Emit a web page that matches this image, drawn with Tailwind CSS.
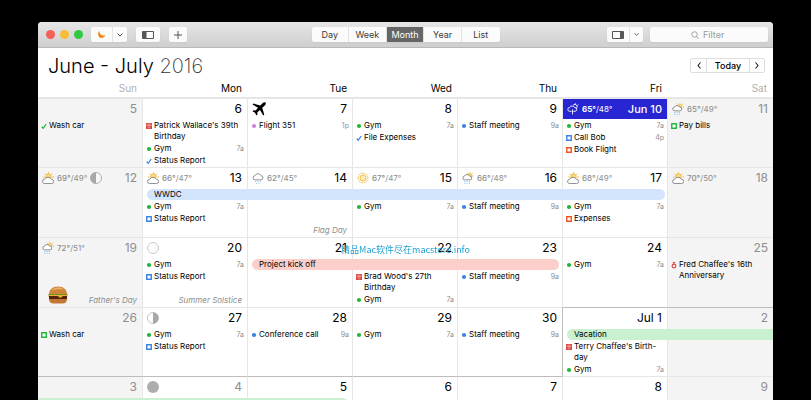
<!DOCTYPE html>
<html lang="en">
<head>
    <meta charset="UTF-8">
    <meta name="viewport" content="width=device-width, initial-scale=1.0">
    <title>Calendar - June - July 2016</title>
    <script src="https://cdn.jsdelivr.net/npm/@tailwindcss/browser@4"></script>
</head>
<body class="h-screen overflow-hidden bg-black px-[38px] pt-[22px] font-['Inter','Noto_Sans_CJK_SC',sans-serif] text-black">

    <!-- Icons -->
    <svg class="hidden">
        <symbol id="partly" viewBox="0 0 26 26">
            <g stroke="#f3b93f" stroke-width="2" stroke-linecap="round"><path d="M14 1v2M6 4l1.500 1.500M3 11h2M22 4l-1.500 1.500M25 11h-2"/></g>
            <circle cx="14" cy="10" r="6" fill="#fbd98b" stroke="#f3b93f" stroke-width="2"/>
            <path d="M6 25a4.500 4.500 0 0 1-.5-9 8 7 0 0 1 15 0 4.500 4.500 0 0 1 .5 9z" fill="#fff" stroke="#858585" stroke-width="2"/>
        </symbol>
        <symbol id="sunrain" viewBox="0 0 26 26">
            <circle cx="17" cy="8" r="4.500" fill="#fbd98b" stroke="#f3b93f" stroke-width="2"/>
            <path d="M17 0v1.500M23 2.500l-1 1M25.500 9H24M11 2l1 1" stroke="#f3b93f" stroke-width="2" stroke-linecap="round"/>
            <path d="M6 17a4 4 0 0 1-.5-8 6 6 0 0 1 11 0 4 4 0 0 1 1 8z" fill="#fff" stroke="#858585" stroke-width="2"/>
            <path d="M6 20v2M11 20v2M16 20v2M6 24v1.500M11 24v1.500M16 24v1.500" stroke="#5aaeea" stroke-width="2"/>
        </symbol>
        <symbol id="rain" viewBox="0 0 26 26">
            <path d="M7 17a4.500 4.500 0 0 1-.5-9 7 7 0 0 1 13 0 4.500 4.500 0 0 1-.5 9z" fill="#fff" stroke="#858585" stroke-width="2"/>
            <path d="M8 20v2M13 20v2M18 20v2M10 24v1.500M15 24v1.500" stroke="#5aaeea" stroke-width="2"/>
        </symbol>
        <symbol id="storm" viewBox="0 0 26 26">
            <g fill="none" stroke="#fff" stroke-width="2" stroke-linecap="round">
                <path d="M9 18H6a4 4 0 0 1-.5-8 6 6 0 0 1 11 0 4 4 0 0 1 1 8h-3"/>
                <path d="M14 4a5 5 0 0 1 7 7M18 1v0M24 4l-1 1M12 15v9"/>
            </g>
        </symbol>
        <symbol id="sun" viewBox="0 0 26 26">
            <circle cx="13" cy="13" r="6.500" fill="#fdeebb" stroke="#f3b93f" stroke-width="2"/>
            <path d="M13 1v3M13 22v3M1 13h3M22 13h3M4.500 4.500l2 2M19.500 19.500l2 2M4.500 21.500l2-2M19.500 6.500l2-2M8.500 2l1 2.500M17.500 2l-1 2.500M8.500 24l1-2.500M17.500 24l-1-2.500M2 8.500l2.500 1M2 17.500l2.500-1M24 8.500l-2.500 1M24 17.500l-2.500-1" stroke="#f0ae28" stroke-width="1.800"/>
        </symbol>
        <symbol id="moonLast" viewBox="0 0 24 24">
            <circle cx="12" cy="12" r="11" fill="#f8f8f8" stroke="#b0b0b0" stroke-width="2"/><path d="M12 1a11 11 0 0 0 0 22z" fill="#a8a8a8"/>
        </symbol>
        <symbol id="moonHalf" viewBox="0 0 24 24">
            <circle cx="12" cy="12" r="11" fill="#fff" stroke="#c4c4c4" stroke-width="2"/><path d="M12 1a11 11 0 0 1 0 22z" fill="#a8a8a8"/>
        </symbol>
        <symbol id="moonFull" viewBox="0 0 24 24">
            <circle cx="12" cy="12" r="11" fill="#fff" stroke="#c8c8c8" stroke-width="2"/><circle cx="12" cy="12" r="6" fill="none" stroke="#ececec"/>
        </symbol>
        <symbol id="moonNew" viewBox="0 0 24 24"><circle cx="12" cy="12" r="12" fill="#adadad"/></symbol>
        <symbol id="plane" viewBox="0 0 28 28">
            <path d="M27 1c-1.500-1.500-4-.5-6 1.500l-4.500 4.500L3 3 1 5l11 6.500-5 5.500-4-.5L1 18.500l5 3 3 5.500 2-2-.5-4 5.500-5L22.500 27l2-2-4-13.500L25.500 7c2-2 3-4.500 1.500-6z"/>
        </symbol>
        <symbol id="burger" viewBox="0 0 40 36">
            <path d="M2 17C2 7 9 1 20 1s18 6 18 16z" fill="#d08439"/>
            <path d="M7 9C10 5 14 3 20 3s9 1 12 4c-6-1-18-1-25 2z" fill="#eeb168"/>
            <path d="M1 16h38v3H1z" fill="#6f8f35"/>
            <path d="M1 18h38v3l-9 1-5 3-5-3H1z" fill="#eeb02e"/>
            <path d="M2 20h17l6 4 5-4h8v7H2z" fill="#52260f"/>
            <path d="M2 26h36c0 6-4 9-9 9H11c-5 0-9-3-9-9z" fill="#c47733"/>
        </symbol>
        <symbol id="dot" viewBox="0 0 8 8"><circle cx="4" cy="4" r="2.100" fill="currentColor"/></symbol>
        <symbol id="box" viewBox="0 0 8 8"><path d="M1.750 1.750h4.500v4.500h-4.500z" fill="#fff" stroke="currentColor" stroke-width="1.400"/></symbol>
        <symbol id="check" viewBox="0 0 8 8"><path d="M1.800 4.700l1.400 1.600L6.200 2" fill="none" stroke="currentColor" stroke-width="1.300"/></symbol>
        <symbol id="gift" viewBox="0 0 8 8"><path d="M1 1h6v6H1z" fill="currentColor"/><path d="M3.200 1.500v5M4.800 1.500v5M1 3.200h6" stroke="#fff" stroke-width=".4"/></symbol>
        <symbol id="ring" viewBox="0 0 8 8"><circle cx="4" cy="5" r="1.900" fill="none" stroke="currentColor" stroke-width="1.100"/><path d="M2.500 1h3L4 3z" fill="currentColor"/></symbol>
    </svg>

    <main class="relative overflow-hidden rounded-t-[4px] bg-white">
        <!-- Toolbar -->
        <header class="grid h-[26px] grid-cols-[1fr_auto_1fr] items-center border-b border-[#b9b9b9] bg-linear-to-b from-[#e6e6e6] to-[#cfcfcf] px-[5px] text-[9px] text-[#3c3c3c]">
            <div class="flex items-center pl-[3px]">
                <div class="mr-2 flex gap-[5px]">
                    <span class="size-[9px] rounded-full bg-[#f4605a]"></span>
                    <span class="size-[9px] rounded-full bg-[#f8bd36]"></span>
                    <span class="size-[9px] rounded-full bg-[#2fc944]"></span>
                </div>
                <div class="mr-[9px] flex h-[15px] rounded-xs bg-[#fbfbfb] shadow-xs">
                    <button aria-label="Calendar set" class="flex w-[22px] items-center justify-center border-r border-[#e2e2e2]">
                        <svg class="size-[9px]" viewBox="0 0 18 18"><path d="M5 1c-1 7 5 11 12 10-3 6-11 7-14 1-2-4 0-8 2-11z" fill="#f08a1d"/></svg>
                    </button>
                    <button aria-label="Choose set" class="flex w-[14px] items-center justify-center">
                        <svg class="size-[6px]" viewBox="0 0 12 12"><path d="M1 3l5 5 5-5" fill="none" stroke="#444" stroke-width="2"/></svg>
                    </button>
                </div>
                <button aria-label="Toggle sidebar" class="mr-[9px] flex h-[15px] w-6 items-center justify-center rounded-xs bg-[#fbfbfb] shadow-xs">
                    <svg class="h-2 w-3" viewBox="0 0 24 16"><path d="M1 1h22v14H1z" fill="none" stroke="#555" stroke-width="2"/><path d="M2 2h7v12H2z" fill="#555"/></svg>
                </button>
                <button aria-label="New event" class="flex h-[15px] w-[18px] items-center justify-center rounded-xs bg-[#fbfbfb] shadow-xs">
                    <svg class="size-2" viewBox="0 0 16 16"><path d="M8 0v16M0 8h16" stroke="#555" stroke-width="2"/></svg>
                </button>
            </div>
            <nav class="grid h-[15px] w-[188px] grid-cols-5 divide-x divide-[#e2e2e2] overflow-hidden rounded-xs bg-[#fbfbfb] shadow-xs">
                <button>Day</button>
                <button>Week</button>
                <button class="bg-[#666] text-white">Month</button>
                <button>Year</button>
                <button>List</button>
            </nav>
            <div class="flex items-center justify-end">
                <div class="mr-[7px] flex h-[15px] rounded-xs bg-[#fbfbfb] shadow-xs">
                    <button aria-label="Toggle details" class="flex w-[23px] items-center justify-center border-r border-[#e2e2e2]">
                        <svg class="h-2 w-3" viewBox="0 0 24 16"><path d="M1 1h22v14H1z" fill="none" stroke="#555" stroke-width="2"/><path d="M16 2h6v12h-6z" fill="#555"/></svg>
                    </button>
                    <button aria-label="Detail options" class="flex w-[13px] items-center justify-center">
                        <svg class="size-[5px]" viewBox="0 0 12 12"><path d="M1 3l5 5 5-5" fill="none" stroke="#444" stroke-width="2"/></svg>
                    </button>
                </div>
                <label class="flex h-[15px] w-[118px] items-center justify-center gap-1 rounded-xs bg-[#fbfbfb] shadow-xs">
                    <svg class="size-2" viewBox="0 0 16 16"><circle cx="7" cy="7" r="5.500" fill="none" stroke="#888" stroke-width="1.500"/><path d="M11 11l4.500 4.500" stroke="#888" stroke-width="1.500"/></svg>
                    <input type="text" aria-label="Filter" placeholder="Filter" class="w-6 outline-none placeholder:text-[#999]">
                </label>
            </div>
        </header>

        <!-- Title and navigation -->
        <div class="flex h-[34px] items-center justify-between pr-2 pl-[10px]">
            <h1 class="pt-[2px] text-[20px] leading-6 font-light">June - July <span class="font-extralight text-[#333]">2016</span></h1>
            <div class="flex h-[15px] divide-x divide-[#ddd] rounded-xs border border-[#ddd] text-[9px] font-medium">
                <button aria-label="Previous month" class="flex w-4 items-center justify-center">
                    <svg class="h-[7px] w-1" viewBox="0 0 8 14"><path d="M7 1L2 7l5 6" fill="none" stroke="#222" stroke-width="2.200"/></svg>
                </button>
                <button class="w-[43px]">Today</button>
                <button aria-label="Next month" class="flex w-[14px] items-center justify-center">
                    <svg class="h-[7px] w-1" viewBox="0 0 8 14"><path d="M1 1l5 6-5 6" fill="none" stroke="#222" stroke-width="2.200"/></svg>
                </button>
            </div>
        </div>

        <!-- Weekday names -->
        <div class="grid h-[15px] grid-cols-7 text-right text-[10px] leading-3">
            <div class="pr-1.5 text-[#b0b0b0]">Sun</div>
            <div class="pr-1.5">Mon</div>
            <div class="pr-1.5">Tue</div>
            <div class="pr-1.5">Wed</div>
            <div class="pr-1.5">Thu</div>
            <div class="pr-1.5">Fri</div>
            <div class="pr-1.5 text-[#b0b0b0]">Sat</div>
        </div>

        <div id="weeks"></div>
    </main>

    <p class="fixed inset-x-0 top-[242px] z-20 text-center font-['Noto_Sans_CJK_SC',sans-serif] text-[9px] leading-4 text-[#1e9fd0]">精品Mac软件尽在macstore.info</p>

    <script>
        const GREEN = 'text-[#1fb83a]', BLUE = 'text-[#3b82e6]', RED = 'text-[#d8453e]', ORANGE = 'text-[#ee5423]', PINK = 'text-[#cf83dd]';
        const COLS = ['col-start-1', 'col-start-2', 'col-start-3', 'col-start-4', 'col-start-5', 'col-start-6', 'col-start-7'];

        // event: [icon, color, title, time]
        const gym = ['dot', GREEN, 'Gym', '7a'];
        const staff = ['dot', BLUE, 'Staff meeting', '9a'];
        const report = ['box', BLUE, 'Status Report'];

        const weeks = [
            { height: 'min-h-[70px]', days: [
                { n: '5', events: [['check', GREEN, 'Wash car']] },
                { n: '6', events: [['gift', RED, "Patrick Wallace's 39th Birthday"], gym, ['check', BLUE, 'Status Report']] },
                { n: '7', sticker: 'plane', events: [['dot', PINK, 'Flight 351', '1p']] },
                { n: '8', events: [gym, ['check', BLUE, 'File Expenses']] },
                { n: '9', events: [staff] },
                { n: 'Jun 10', today: true, weather: ['storm', '65°', '48°'], events: [gym, ['box', BLUE, 'Call Bob', '4p'], ['box', ORANGE, 'Book Flight']] },
                { n: '11', weather: ['sunrain', '65°', '49°'], events: [['box', GREEN, 'Pay bills']] }
            ] },
            { height: 'min-h-[70px]', bar: ['WWDC', 'col-start-2 col-end-7 ml-1 mr-[3px] rounded-full bg-[#d3e4fd] pl-[7px]'], days: [
                { n: '12', weather: ['partly', '69°', '49°'], moon: 'moonLast' },
                { n: '13', weather: ['partly', '66°', '47°'], under: true, events: [gym, report] },
                { n: '14', weather: ['rain', '62°', '45°'], note: 'Flag Day' },
                { n: '15', weather: ['sun', '67°', '47°'], under: true, events: [gym] },
                { n: '16', weather: ['sunrain', '66°', '48°'], under: true, events: [staff] },
                { n: '17', weather: ['partly', '68°', '49°'], under: true, events: [gym, ['box', ORANGE, 'Expenses']] },
                { n: '18', weather: ['partly', '70°', '50°'] }
            ] },
            { height: 'min-h-[70px]', bar: ['Project kick off', 'col-start-3 col-end-6 ml-1 mr-1 rounded-full bg-[#fdcfca] pl-[7px]'], days: [
                { n: '19', weather: ['sunrain', '72°', '51°'], burger: true, note: "Father's Day" },
                { n: '20', moon: 'moonFull', note: 'Summer Solstice', events: [gym, report] },
                { n: '21' },
                { n: '22', under: true, events: [['gift', RED, "Brad Wood's 27th<br>Birthday"], gym] },
                { n: '23', under: true, events: [staff] },
                { n: '24', events: [gym] },
                { n: '25', events: [['ring', RED, "Fred Chaffee's 16th<br>Anniversary"]] }
            ] },
            { height: 'min-h-[69px]', bar: ['Vacation', 'col-start-6 col-end-8 ml-1 rounded-l-full bg-[#c9f0cf] pl-[7px]'], days: [
                { n: '26', events: [['box', GREEN, 'Wash car']] },
                { n: '27', moon: 'moonHalf', events: [gym, report] },
                { n: '28', events: [['dot', BLUE, 'Conference call', '9a']] },
                { n: '29', events: [gym] },
                { n: '30', edge: 'border-r-[#bdbdbd]', events: [staff] },
                { n: 'Jul 1', edge: 'border-t-[#bdbdbd]', under: true, events: [['gift', RED, "Terry Chaffee's Birth-<br>day"], gym] },
                { n: '2', edge: 'border-t-[#bdbdbd]' }
            ] },
            { height: 'min-h-[70px]', bar: ['', 'col-start-1 col-end-4 mr-[5px] rounded-r-full bg-[#c9f0cf]'], days: [
                { n: '3', edge: 'border-t-[#bdbdbd]' },
                { n: '4', edge: 'border-t-[#bdbdbd]', moon: 'moonNew', muted: true },
                { n: '5', edge: 'border-t-[#bdbdbd]' },
                { n: '6', edge: 'border-t-[#bdbdbd]' },
                { n: '7', edge: 'border-t-[#bdbdbd]' },
                { n: '8' },
                { n: '9' }
            ] }
        ];

        function icon(id, cls) {
            return `<svg class="${cls}"><use href="#${id}"/></svg>`;
        }

        function eventRow([id, color, title, time]) {
            return `<li class="flex leading-[11px]">
                ${icon(id, `mt-[2px] mr-px size-2 shrink-0 ${color}`)}
                <span class="flex-1">${title}</span>
                ${time ? `<time class="text-[7px] text-[#8e8e8e]">${time}</time>` : ''}
            </li>`;
        }

        function dayCell(day, col, row) {
            const weekend = col === 0 || col === 6;
            const muted = weekend || day.muted;
            const w = day.weather;
            const border = (row === 0 ? 'border-t-2 ' : 'border-t ') + (col < 6 ? 'border-r' : '');
            return `<section class="${COLS[col]} row-start-1 flex flex-col ${border} border-[#e6e6e6] ${weekend ? 'bg-[#f4f4f4]' : 'bg-white'} ${day.edge || ''}">
                <div class="mb-px flex h-5 items-center gap-[3px] pr-[5px] pl-1 text-[8px] ${day.today ? 'bg-[#2826d3] text-white' : 'text-[#8e8e8e]'}">
                    ${w ? icon(w[0], 'size-3 shrink-0') + `<span><b class="${day.today ? 'font-bold' : 'font-medium'}">${w[1]}</b>/${w[2]}</span>` : ''}
                    ${day.moon ? icon(day.moon, 'size-3 shrink-0') : ''}
                    ${day.sticker ? icon(day.sticker, 'size-[14px] shrink-0 text-black') : ''}
                    <h2 class="ml-auto whitespace-nowrap ${day.today ? 'text-[11px] font-medium' : muted ? 'text-[12px] text-[#8e8e8e]' : 'text-[12px] text-black'}">${day.n}</h2>
                </div>
                <ul class="flex flex-col gap-px pr-[3px] pl-[2px] ${day.under ? 'pt-3' : ''}">${(day.events || []).map(eventRow).join('')}</ul>
                <div class="mt-auto flex items-end pr-[5px] pl-[10px]">
                    ${day.burger ? icon('burger', 'mb-[3px] h-[18px] w-5') : ''}
                    ${day.note ? `<em class="ml-auto leading-[13px] text-[#8e8e8e]">${day.note}</em>` : ''}
                </div>
            </section>`;
        }

        document.getElementById('weeks').innerHTML = weeks.map((week, row) => `
            <div class="grid ${week.height} grid-cols-7 text-[8px]">
                ${week.days.map((day, col) => dayCell(day, col, row)).join('')}
                ${week.bar ? `<div class="z-10 row-start-1 mt-[22px] h-[11px] self-start leading-[11px] ${week.bar[1]}">${week.bar[0]}</div>` : ''}
            </div>`).join('');
    </script>
</body>
</html>
